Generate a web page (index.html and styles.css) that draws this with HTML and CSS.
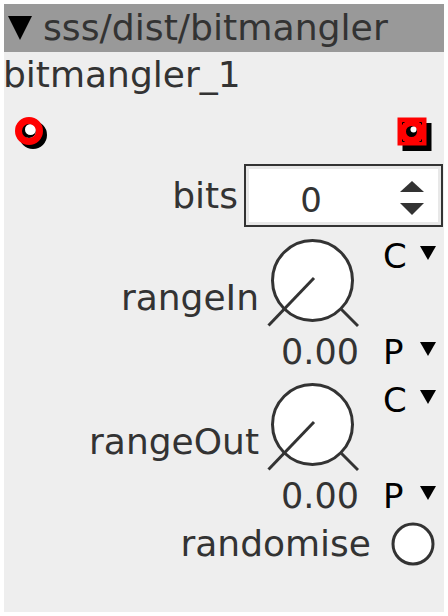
FILE: index.html
```html
<!DOCTYPE html>
<html>
<head>
<meta charset="utf-8">
<link rel="stylesheet" href="styles.css">
</head>
<body>
<div class="panel">
  <div class="header">
    <svg class="tri" width="24" height="24" viewBox="0 0 24 24"><polygon points="0,0 24,0 12,24" fill="#000"/></svg>
    <span class="title">sss/dist/bitmangler</span>
  </div>
  <div class="name">bitmangler_1</div>
  <div class="ports">
    <svg class="port-in" width="44" height="40" viewBox="0 0 44 40">
      <circle cx="25" cy="21" r="10.5" fill="none" stroke="#000" stroke-width="7"/>
      <circle cx="21" cy="17" r="7" fill="#000"/>
      <circle cx="22.5" cy="15.5" r="5.5" fill="#fff"/>
      <circle cx="21" cy="17" r="10.5" fill="none" stroke="#f00" stroke-width="7"/>
    </svg>
    <svg class="port-out" width="40" height="40" viewBox="0 0 40 40">
      <rect x="6.5" y="9" width="29" height="28" fill="#000"/>
      <rect x="1.5" y="3.5" width="29" height="28" fill="#f00"/>
      <rect x="6.5" y="8.5" width="19" height="19" fill="none" stroke="#000" stroke-width="1" stroke-dasharray="2 15 2 0"/>
      <circle cx="15.5" cy="17.5" r="5.5" fill="#000"/>
      <circle cx="17.5" cy="15.5" r="3" fill="#fff"/>
    </svg>
  </div>
  <div class="row bits-row">
    <span class="label bits-label">bits</span>
    <div class="numbox">
      <span class="num">0</span>
      <svg class="spin" width="24" height="34" viewBox="0 0 24 34">
        <polygon points="12,0 24,11 0,11" fill="#333"/>
        <polygon points="0,22 24,22 12,34" fill="#333"/>
      </svg>
    </div>
  </div>
  <div class="row knob-row">
    <span class="label knob-label">rangeIn</span>
    <div class="knobcol">
      <svg class="knob" width="92" height="92" viewBox="0 0 92 92">
        <circle cx="45.5" cy="43.5" r="40" fill="#fff" stroke="#333" stroke-width="3"/>
        <line x1="47" y1="41" x2="1.5" y2="88.5" stroke="#333" stroke-width="3"/>
        <line x1="74.5" y1="72.5" x2="91" y2="89" stroke="#333" stroke-width="3"/>
      </svg>
      <span class="value">0.00</span>
    </div>
    <div class="cpcol">
      <div class="cp"><span>C</span><svg class="dd" width="16" height="14" viewBox="0 0 16 14"><polygon points="0,0 16,0 8,14" fill="#000"/></svg></div>
      <div class="cp"><span>P</span><svg class="dd" width="16" height="14" viewBox="0 0 16 14"><polygon points="0,0 16,0 8,14" fill="#000"/></svg></div>
    </div>
  </div>
  <div class="row knob-row">
    <span class="label knob-label">rangeOut</span>
    <div class="knobcol">
      <svg class="knob" width="92" height="92" viewBox="0 0 92 92">
        <circle cx="45.5" cy="43.5" r="40" fill="#fff" stroke="#333" stroke-width="3"/>
        <line x1="47" y1="41" x2="1.5" y2="88.5" stroke="#333" stroke-width="3"/>
        <line x1="74.5" y1="72.5" x2="91" y2="89" stroke="#333" stroke-width="3"/>
      </svg>
      <span class="value">0.00</span>
    </div>
    <div class="cpcol">
      <div class="cp"><span>C</span><svg class="dd" width="16" height="14" viewBox="0 0 16 14"><polygon points="0,0 16,0 8,14" fill="#000"/></svg></div>
      <div class="cp"><span>P</span><svg class="dd" width="16" height="14" viewBox="0 0 16 14"><polygon points="0,0 16,0 8,14" fill="#000"/></svg></div>
    </div>
  </div>
  <div class="row rand-row">
    <span class="label rand-label">randomise</span>
    <svg class="radio" width="44" height="44" viewBox="0 0 44 44"><circle cx="22" cy="22" r="20" fill="#fff" stroke="#333" stroke-width="3"/></svg>
  </div>
</div>
</body>
</html>
```

FILE: styles.css
```css
html, body {
  margin: 0;
  padding: 0;
  background: #fff;
}

body {
  font-family: "DejaVu Sans", "Liberation Sans", sans-serif;
  color: #333;
}

.panel {
  margin: 4px;
  width: 440px;
  height: 608px;
  background: #eee;
  display: flex;
  flex-direction: column;
}

.header {
  height: 48px;
  background: #999;
  display: flex;
  align-items: center;
  padding-left: 4px;
}

.tri {
  display: block;
  flex: none;
}

.title {
  margin-left: 11px;
  font-size: 36.2px;
  line-height: 48px;
  color: #333;
  white-space: nowrap;
}

.name {
  margin-top: 3px;
  margin-left: -1px;
  font-size: 36px;
  line-height: 40px;
  white-space: nowrap;
}

.ports {
  margin-top: 19px;
  height: 40px;
  display: flex;
  justify-content: space-between;
  padding: 0 8px 0 4px;
}

.ports svg {
  display: block;
}

.row {
  display: flex;
  justify-content: flex-end;
}

.label {
  font-size: 36px;
  line-height: 40px;
  white-space: nowrap;
}

.bits-row {
  margin-top: 10px;
  align-items: center;
  padding-right: 1px;
}

.bits-label {
  margin-right: 6px;
}

.numbox {
  box-sizing: border-box;
  width: 199px;
  height: 63px;
  border: 2px solid #333;
  background: #fff;
  box-shadow: inset 0 0 0 3px #e8e8e8;
  display: flex;
  align-items: center;
}

.num {
  width: 130px;
  text-align: center;
  font-size: 34px;
  line-height: 40px;
  padding-top: 9px;
  color: #333;
}

.spin {
  display: block;
  margin-left: 24px;
  margin-top: 5px;
}

.knob-row {
  margin-top: 10px;
  padding-right: 8px;
  align-items: flex-start;
}

.knob-label {
  margin-top: 41px;
  margin-right: 8px;
}

.knobcol {
  width: 92px;
  display: flex;
  flex-direction: column;
}

.knob {
  display: block;
}

.value {
  margin-top: 4px;
  font-size: 35px;
  line-height: 38px;
  text-align: right;
  white-space: nowrap;
  color: #333;
}

.cpcol {
  margin-left: 24px;
  width: 53px;
  height: 134px;
  display: flex;
  flex-direction: column;
  justify-content: space-between;
}

.cp {
  display: flex;
  align-items: flex-start;
  font-size: 34px;
  line-height: 38px;
  color: #000;
}

.dd {
  display: block;
  margin-left: auto;
  margin-top: 9px;
}

.rand-row {
  margin-top: 7px;
  padding-right: 9px;
  align-items: center;
}

.rand-label {
  margin-right: 20px;
}

.radio {
  display: block;
}
```
